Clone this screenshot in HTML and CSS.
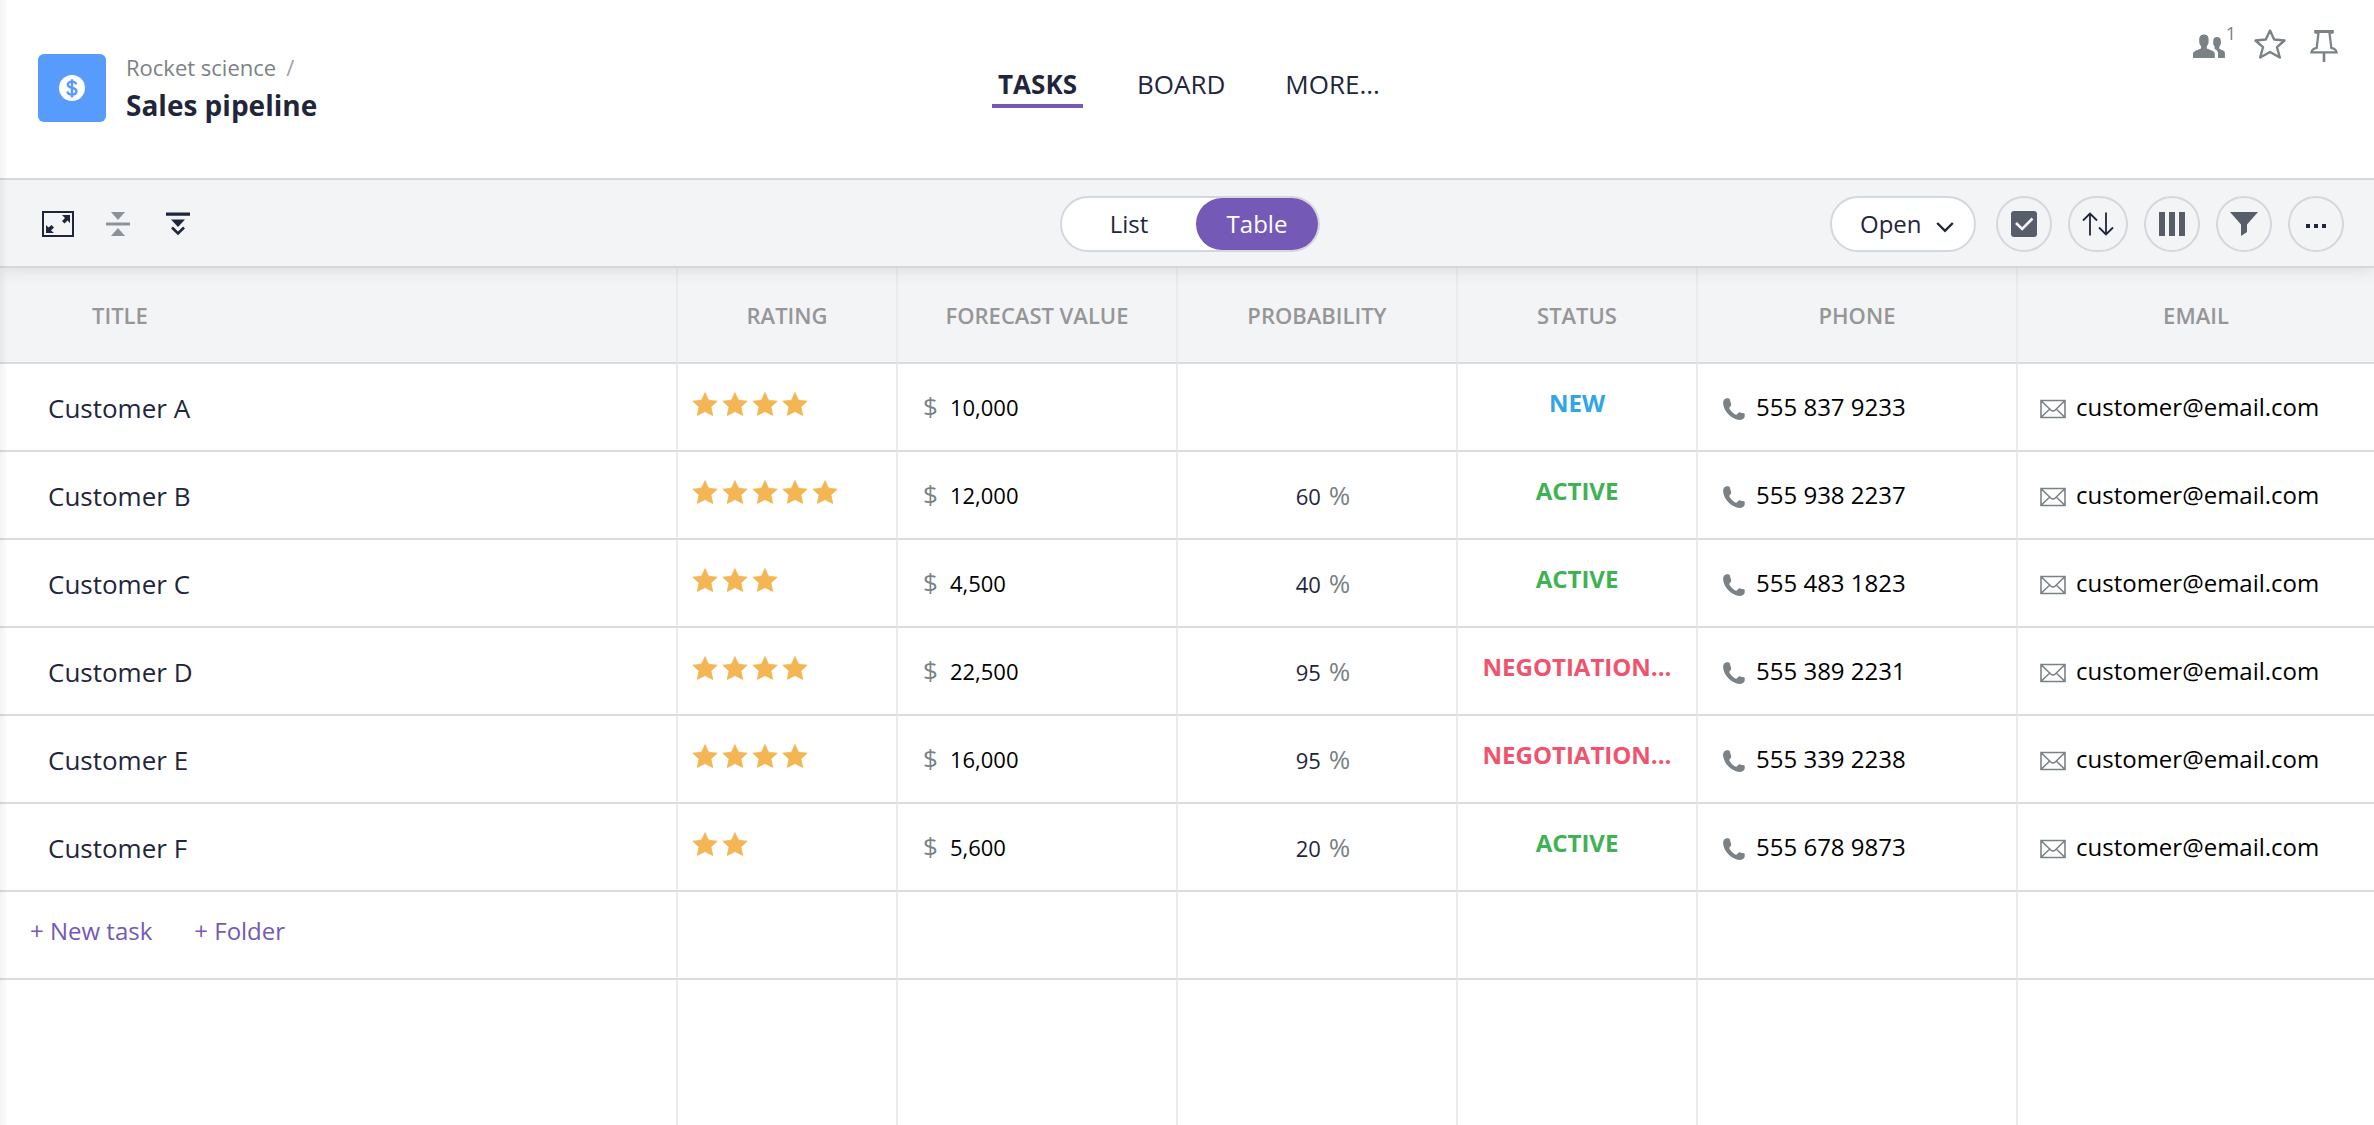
FILE: index.html
```html
<!DOCTYPE html>
<html lang="en">
<head>
<meta charset="utf-8">
<meta name="viewport" content="width=device-width, initial-scale=1">
<title>Sales pipeline</title>
<link rel="stylesheet" href="styles.css">
</head>
<body>
<svg class="sprite" aria-hidden="true">
  <symbol id="star" viewBox="0 0 26 24"><path d="M13 .6 16.5 8.2 25.2 9.2 18.9 14.9 20.8 23.4 13 19.6 5.2 23.4 7.1 14.9.8 9.2 9.5 8.2Z" fill="currentColor" stroke="currentColor" stroke-width=".8" stroke-linejoin="round"/></symbol>
  <symbol id="phone" viewBox="0 0 24 22"><path d="M3.8.4C2.3.9 1.2 2.5 1.1 4.6c-.1 4 2 8.500 5.500 12 3.200 3.200 7.200 5.200 10.900 5.300 2.400 0 4.400-1.200 5-2.700.3-.7.3-2.500.2-3.100-.1-.3-.4-.6-.8-.8l-4-.9c-.5-.1-.9 0-1.300.3l-1.900 1.700c-.4.3-.8.4-1.300.2-2.200-1-4.800-3.600-6-6-.2-.5-.1-.9.2-1.300L9 7.500c.3-.4.3-.8.2-1.300L7.700 1.300C7.600.8 7.300.5 6.800.400 6 .1 4.600.100 3.800.4Z" fill="currentColor"/></symbol>
  <symbol id="mail" viewBox="0 0 26 20"><path d="M1 1.500h24v17H1ZM1.500 2l9.200 9q2.300 2 4.600 0l9.200-9M1.500 18l8.200-8M24.500 18l-8.200-8" fill="none" stroke="currentColor" stroke-width="1.600"/></symbol>
</svg>

<header class="header">
  <div class="brand">
    <span class="brand-logo">
      <svg width="26" height="26" viewBox="0 0 26 26" aria-hidden="true">
        <circle cx="13" cy="13" r="13" fill="#fff"/>
        <path d="M17.200 9.400C16.900 7.500 15.300 6.600 13 6.600c-2.500 0-4.200 1.100-4.200 3s1.600 2.700 4.200 3.200c2.800.5 4.400 1.400 4.400 3.500 0 2-1.800 3.300-4.400 3.300-2.500 0-4.300-1.100-4.600-3.200M13 4.200v18.200" fill="none" stroke="#579bfc" stroke-width="2.400"/>
      </svg>
    </span>
    <div class="brand-text">
      <p class="breadcrumb"><a href="#">Rocket science</a><span class="slash">/</span></p>
      <h1 class="title">Sales pipeline</h1>
    </div>
  </div>
  <nav class="tabs">
    <a class="tab tab-active" href="#">TASKS</a>
    <a class="tab" href="#">BOARD</a>
    <a class="tab" href="#">MORE...</a>
  </nav>
  <div class="actions">
    <button class="action members" aria-label="Members">
      <svg width="32" height="24" viewBox="0 0 32 24" aria-hidden="true"><path d="M11 .5c3 0 4.600 1.900 4.600 4.700v2.600c0 1.900-.8 3.400-1.800 4.400v2.200l5.600 2.400c1.600.8 2.400 1.700 2.400 3.200v4H0v-4c0-1.500.9-2.400 2.500-3.200l5.500-2.400v-2.200C7 11.200 6.200 9.700 6.200 7.800V5.200C6.200 2.400 8 .5 11 .5ZM24 3c2.400 0 3.900 1.500 3.900 4v1.800c0 1.700-.6 2.900-1.600 3.900v2l3.700 1.700c1.300.6 1.900 1.300 1.900 2.600v5H25v-4.500c0-2-.8-3.200-2.400-4.100l-1-.5v-2.400c-1-.9-1.400-2-1.400-3.700V7c0-2.400 1.400-4 3.800-4Z" fill="currentColor"/></svg>
      <span class="count">1</span>
    </button>
    <button class="action" aria-label="Favourite">
      <svg width="32" height="34" viewBox="0 0 32 34" aria-hidden="true"><path d="M16 4.500 20.200 13.500 30.500 14.500 23 21.200 25.800 31.500 16 26 6.200 31.500 9 21.200 1.500 14.500 11.800 13.500Z" fill="none" stroke="currentColor" stroke-width="2.400" stroke-linejoin="round"/></svg>
    </button>
    <button class="action pin" aria-label="Pin">
      <svg width="28" height="37" viewBox="0 -3 28 37" aria-hidden="true"><path d="M5.500 2.200h17v1.400l-3 .3 1.800 15c2.900.6 4.900 1.900 5.300 4.400H1.400c.4-2.500 2.400-3.800 5.300-4.400l1.800-15-3-.3Z" fill="none" stroke="currentColor" stroke-width="2.200"/><path d="M14 23v10" stroke="currentColor" stroke-width="2.600"/><path d="M4.500 1h19v3h-19Z" fill="currentColor"/></svg>
    </button>
  </div>
</header>

<section class="toolbar" aria-label="View options">
  <div class="tools">
    <button class="tool" aria-label="Full screen">
      <svg width="32" height="26" viewBox="0 0 32 26" aria-hidden="true"><path d="M1 1h30v24H1Z" fill="none" stroke="currentColor" stroke-width="2"/><path d="M20 4h8v8l-2.500-2.500-3 3-2.500-2.500 3-3ZM12 22H4v-8l2.500 2.500 3-2.500L12 16.500l-3 3Z" fill="currentColor"/></svg>
    </button>
    <button class="tool tool-muted" aria-label="Collapse all">
      <svg width="24" height="24" viewBox="0 0 24 24" aria-hidden="true"><path d="M5 0h14l-7 8ZM0 10.500h24v3H0ZM12 16l7 8H5Z" fill="currentColor"/></svg>
    </button>
    <button class="tool" aria-label="Expand all">
      <svg width="24" height="24" viewBox="0 0 24 24" aria-hidden="true"><path d="M0 .5h24v3.200H0ZM5 7.500h14l-7 7.500Z" fill="currentColor"/><path d="M6 15.500l6 6 6-6" fill="none" stroke="currentColor" stroke-width="2.600"/></svg>
    </button>
  </div>
  <div class="switch">
    <button class="switch-option">List</button>
    <button class="switch-option switch-on" aria-pressed="true">Table</button>
  </div>
  <div class="filters">
    <div class="status-filter">
      <select class="status-select" aria-label="Task state"><option>Open</option><option>Done</option></select>
      <svg class="chevron" width="18" height="12" viewBox="0 0 18 12" aria-hidden="true"><path d="M1.200 2 9 9.800 16.800 2" fill="none" stroke="currentColor" stroke-width="2.400"/></svg>
    </div>
    <div class="round-buttons">
      <button class="round" aria-label="Select tasks">
        <svg width="26" height="26" viewBox="0 0 26 26" aria-hidden="true"><rect width="26" height="26" rx="3" fill="#575d69"/><path d="M5 12 11.200 18 21.500 7.500" fill="none" stroke="#f3f4f6" stroke-width="2.600"/></svg>
      </button>
      <button class="round round-wide" aria-label="Sort">
        <svg width="32" height="24" viewBox="0 0 32 24" aria-hidden="true"><path d="M8 23.500V1.500M1 8.500l7-7 7 7M24 .500v22M17 15.500l7 7 7-7" fill="none" stroke="currentColor" stroke-width="1.800"/></svg>
      </button>
      <button class="round" aria-label="Columns">
        <svg width="26" height="24" viewBox="0 0 26 24" aria-hidden="true"><path d="M0 0h6v24H0ZM10 0h6v24h-6ZM20 0h6v24h-6Z" fill="#575d69"/></svg>
      </button>
      <button class="round" aria-label="Filter">
        <svg width="28" height="24" viewBox="0 0 28 24" aria-hidden="true"><path d="M0 0h28L17 12.500V20l-6 4V12.500Z" fill="#575d69"/></svg>
      </button>
      <button class="round" aria-label="More">
        <svg class="dots" width="20" height="4" viewBox="0 0 20 4" aria-hidden="true"><path d="M0 0h4v4H0ZM8 0h4v4H8ZM16 0h4v4h-4Z" fill="currentColor"/></svg>
      </button>
    </div>
  </div>
</section>

<main class="board">
  <table class="grid">
    <colgroup>
      <col><col class="col-rating"><col class="col-value"><col class="col-value"><col class="col-status"><col class="col-phone"><col class="col-email">
    </colgroup>
    <thead>
      <tr><th class="head-title">TITLE</th><th>RATING</th><th>FORECAST VALUE</th><th>PROBABILITY</th><th>STATUS</th><th>PHONE</th><th>EMAIL</th></tr>
    </thead>
    <tbody>
      <tr class="row">
        <td class="name">Customer A</td>
        <td><div class="stars" role="img" aria-label="4 stars"><svg><use href="#star"/></svg><svg><use href="#star"/></svg><svg><use href="#star"/></svg><svg><use href="#star"/></svg></div></td>
        <td><div class="money"><span class="unit">$</span><span>10,000</span></div></td>
        <td></td>
        <td class="status status-new">NEW</td>
        <td><div class="phone"><svg><use href="#phone"/></svg><span>555 837 9233</span></div></td>
        <td><div class="email"><svg><use href="#mail"/></svg><span>customer@email.com</span></div></td>
      </tr>
      <tr class="row">
        <td class="name">Customer B</td>
        <td><div class="stars" role="img" aria-label="5 stars"><svg><use href="#star"/></svg><svg><use href="#star"/></svg><svg><use href="#star"/></svg><svg><use href="#star"/></svg><svg><use href="#star"/></svg></div></td>
        <td><div class="money"><span class="unit">$</span><span>12,000</span></div></td>
        <td><div class="percent"><span>60</span><span class="unit">%</span></div></td>
        <td class="status status-active">ACTIVE</td>
        <td><div class="phone"><svg><use href="#phone"/></svg><span>555 938 2237</span></div></td>
        <td><div class="email"><svg><use href="#mail"/></svg><span>customer@email.com</span></div></td>
      </tr>
      <tr class="row">
        <td class="name">Customer C</td>
        <td><div class="stars" role="img" aria-label="3 stars"><svg><use href="#star"/></svg><svg><use href="#star"/></svg><svg><use href="#star"/></svg></div></td>
        <td><div class="money"><span class="unit">$</span><span>4,500</span></div></td>
        <td><div class="percent"><span>40</span><span class="unit">%</span></div></td>
        <td class="status status-active">ACTIVE</td>
        <td><div class="phone"><svg><use href="#phone"/></svg><span>555 483 1823</span></div></td>
        <td><div class="email"><svg><use href="#mail"/></svg><span>customer@email.com</span></div></td>
      </tr>
      <tr class="row">
        <td class="name">Customer D</td>
        <td><div class="stars" role="img" aria-label="4 stars"><svg><use href="#star"/></svg><svg><use href="#star"/></svg><svg><use href="#star"/></svg><svg><use href="#star"/></svg></div></td>
        <td><div class="money"><span class="unit">$</span><span>22,500</span></div></td>
        <td><div class="percent"><span>95</span><span class="unit">%</span></div></td>
        <td class="status status-negotiation">NEGOTIATION...</td>
        <td><div class="phone"><svg><use href="#phone"/></svg><span>555 389 2231</span></div></td>
        <td><div class="email"><svg><use href="#mail"/></svg><span>customer@email.com</span></div></td>
      </tr>
      <tr class="row">
        <td class="name">Customer E</td>
        <td><div class="stars" role="img" aria-label="4 stars"><svg><use href="#star"/></svg><svg><use href="#star"/></svg><svg><use href="#star"/></svg><svg><use href="#star"/></svg></div></td>
        <td><div class="money"><span class="unit">$</span><span>16,000</span></div></td>
        <td><div class="percent"><span>95</span><span class="unit">%</span></div></td>
        <td class="status status-negotiation">NEGOTIATION...</td>
        <td><div class="phone"><svg><use href="#phone"/></svg><span>555 339 2238</span></div></td>
        <td><div class="email"><svg><use href="#mail"/></svg><span>customer@email.com</span></div></td>
      </tr>
      <tr class="row">
        <td class="name">Customer F</td>
        <td><div class="stars" role="img" aria-label="2 stars"><svg><use href="#star"/></svg><svg><use href="#star"/></svg></div></td>
        <td><div class="money"><span class="unit">$</span><span>5,600</span></div></td>
        <td><div class="percent"><span>20</span><span class="unit">%</span></div></td>
        <td class="status status-active">ACTIVE</td>
        <td><div class="phone"><svg><use href="#phone"/></svg><span>555 678 9873</span></div></td>
        <td><div class="email"><svg><use href="#mail"/></svg><span>customer@email.com</span></div></td>
      </tr>
      <tr class="row">
        <td><div class="add"><button class="add-button">+ New task</button><button class="add-button">+ Folder</button></div></td>
        <td></td><td></td><td></td><td></td><td></td><td></td>
      </tr>
      <tr class="filler"><td></td><td></td><td></td><td></td><td></td><td></td><td></td></tr>
    </tbody>
  </table>
</main>
</body>
</html>
```
FILE: styles.css
```css
:root {
  --ink: #1f263b;
  --grey: #7a8285;
  --purple: #7459b7;
  --panel: #f3f4f6;
  --line: #d5d7de;
}

* { box-sizing: border-box; }

body {
  position: relative;
  display: flex;
  flex-direction: column;
  min-height: 100vh;
  margin: 0;
  background: #fff;
  color: var(--ink);
  font-family: "Open Sans", "Noto Sans", sans-serif;
  font-size: 24px;
  line-height: 32px;
}

body::after {
  content: "";
  position: absolute;
  top: 0;
  bottom: 0;
  left: 0;
  width: 8px;
  background: linear-gradient(to right, rgba(0, 0, 0, 0.05), rgba(0, 0, 0, 0));
  pointer-events: none;
  z-index: 2;
}

button, select {
  margin: 0;
  padding: 0;
  border: 0;
  background: none;
  color: inherit;
  font: inherit;
  cursor: pointer;
}

a { color: inherit; text-decoration: none; }
svg { display: block; flex: none; }
.sprite { position: absolute; width: 0; height: 0; }

/* header */
.header {
  display: grid;
  grid-template-columns: 1fr auto 1fr;
  align-items: center;
  min-height: 180px;
  padding: 0 34px 0 38px;
  border-bottom: 2px solid var(--line);
}

.brand {
  display: flex;
  align-items: center;
  gap: 20px;
  padding-bottom: 2px;
}

.brand-logo {
  display: grid;
  place-items: center;
  width: 68px;
  height: 68px;
  border-radius: 6px;
  background: #579bfc;
}

.breadcrumb {
  display: flex;
  gap: 10px;
  margin: 0;
  color: var(--grey);
  font-size: 22px;
  line-height: 34px;
}

.slash { color: #9fa3a6; }

.title {
  margin: 0;
  font-size: 28px;
  font-weight: 700;
  line-height: 42px;
}

.tabs {
  display: flex;
  gap: 48px;
  padding-bottom: 4px;
  font-size: 26px;
  line-height: 36px;
}

.tab {
  padding: 0 6px 2px;
  border-bottom: 4px solid transparent;
}

.tab-active {
  border-color: var(--purple);
  font-weight: 700;
}

.actions {
  display: flex;
  align-items: flex-start;
  align-self: start;
  justify-content: flex-end;
  gap: 18px;
  padding: 26px 2px 0 0;
  color: var(--grey);
}

.members {
  display: flex;
  align-items: flex-start;
  gap: 1px;
}

.members svg { margin-top: 8px; }

.count {
  font-size: 18px;
  line-height: 14px;
}

.pin { padding-left: 6px; }

/* toolbar */
.toolbar {
  display: grid;
  grid-template-columns: 1fr auto 1fr;
  align-items: center;
  padding: 16px 30px 14px 36px;
  border-bottom: 2px solid var(--line);
  background: var(--panel);
  box-shadow: 0 2px 16px rgba(0, 0, 0, 0.1);
  clip-path: inset(0 0 -24px 0);
  z-index: 1;
}

.tools { display: flex; gap: 16px; }

.tool {
  display: grid;
  place-items: center;
  width: 44px;
  height: 44px;
}

.tool-muted { color: #8d919c; }

.switch {
  display: flex;
  height: 56px;
  border: 2px solid var(--line);
  border-radius: 28px;
  background: #fff;
}

.switch-option { width: 134px; }

.switch-on {
  width: 122px;
  border-radius: 26px;
  background: var(--purple);
  color: #fff;
}

.filters {
  display: flex;
  justify-content: flex-end;
  gap: 20px;
}

.status-filter {
  display: grid;
  grid-template-columns: 1fr;
  align-items: center;
}

.status-select, .chevron { grid-area: 1 / 1; }

.status-select {
  width: 146px;
  height: 56px;
  padding-left: 28px;
  border: 2px solid var(--line);
  border-radius: 28px;
  background: #fff;
  appearance: none;
}

.chevron {
  justify-self: end;
  margin-right: 22px;
  margin-top: 6px;
  pointer-events: none;
}

.round-buttons { display: flex; gap: 16px; }

.round {
  display: grid;
  place-items: center;
  width: 56px;
  height: 56px;
  border: 2px solid var(--line);
  border-radius: 28px;
}

.round-wide { width: 60px; }
.dots { margin-top: 4px; }

/* task table */
.board {
  display: grid;
  flex: 1;
}

.grid {
  width: 100%;
  height: 100%;
  table-layout: fixed;
  border-collapse: separate;
  border-spacing: 0;
}

.col-rating { width: 220px; }
.col-value { width: 280px; }
.col-status { width: 240px; }
.col-phone { width: 320px; }
.col-email { width: 356px; }

th {
  height: 96px;
  padding: 0;
  border-right: 2px solid #e9ebed;
  border-bottom: 2px solid #dcdcdd;
  background: var(--panel);
  color: #969696;
  font-size: 22px;
  font-weight: 600;
}

.head-title { padding-left: 92px; text-align: left; }

td {
  padding: 0;
  border-right: 2px solid #ebebeb;
  vertical-align: middle;
}

th:last-child, td:last-child { border-right: 0; }

.row td {
  height: 88px;
  border-bottom: 2px solid #dcdcdc;
}

.row .name {
  padding: 2px 0 0 48px;
  font-size: 26px;
}

.stars {
  display: flex;
  gap: 4px;
  padding: 0 0 6px 14px;
  color: #f3b653;
}

.stars svg { width: 26px; height: 24px; }

.money, .percent {
  display: flex;
  align-items: baseline;
  font-size: 22px;
  line-height: 36px;
}

.money {
  gap: 12px;
  padding: 0 0 2px 25px;
  color: #000;
}

.percent {
  justify-content: center;
  gap: 8px;
  padding-left: 12px;
}

.unit { color: var(--grey); font-size: 26px; }

.row .status {
  padding-bottom: 8px;
  font-weight: 700;
  text-align: center;
}

.status-new { color: #31a5e7; }
.status-active { color: #3fb254; }
.status-negotiation { color: #f0536d; }

.phone, .email {
  display: flex;
  align-items: center;
  gap: 10px;
  color: #000;
}

.phone { padding-left: 24px; }
.email { padding-left: 22px; }

.phone svg, .email svg { margin-top: 4px; color: var(--grey); }
.phone svg { width: 24px; height: 22px; }
.email svg { width: 26px; height: 20px; }

.add {
  display: flex;
  gap: 42px;
  padding: 0 0 8px 30px;
}

.add-button { color: var(--purple); }

.filler td { height: auto; }
```
